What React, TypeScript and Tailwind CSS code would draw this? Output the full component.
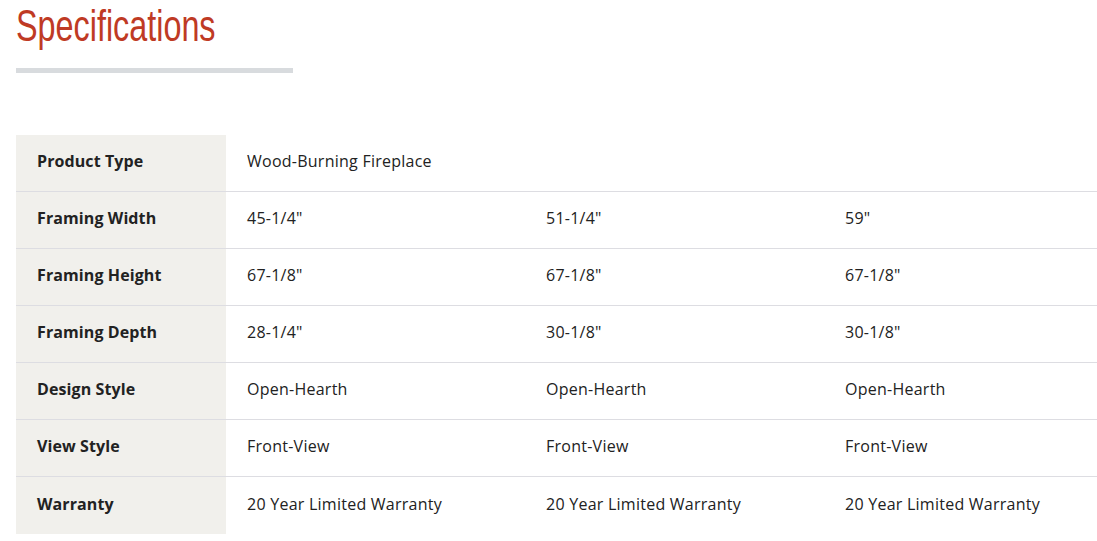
const rows: { label: string; values: string[] }[] = [
  { label: 'Product Type', values: ['Wood-Burning Fireplace'] },
  { label: 'Framing Width', values: ['45-1/4"', '51-1/4"', '59"'] },
  { label: 'Framing Height', values: ['67-1/8"', '67-1/8"', '67-1/8"'] },
  { label: 'Framing Depth', values: ['28-1/4"', '30-1/8"', '30-1/8"'] },
  { label: 'Design Style', values: ['Open-Hearth', 'Open-Hearth', 'Open-Hearth'] },
  { label: 'View Style', values: ['Front-View', 'Front-View', 'Front-View'] },
  { label: 'Warranty', values: ['20 Year Limited Warranty', '20 Year Limited Warranty', '20 Year Limited Warranty'] },
]

export default function App() {
  return (
    <div className="w-[1097px] h-[541px] overflow-hidden bg-white font-['Open_Sans','Noto_Sans',sans-serif] text-[#222222]">
      <div className="pl-4">
        <h2 className="h-[50px] pt-[1px] font-['Liberation_Sans',sans-serif] text-[44px] leading-[50px] text-[#bf3a24] whitespace-nowrap">
          <span className="inline-block origin-left scale-x-[0.735]">Specifications</span>
        </h2>
        <div className="mt-[18px] h-[5px] w-[277px] bg-[#d8dbde]" />
      </div>

      <div className="mt-[62px] pl-4">
        <div className="w-[1107px]">
          {rows.map((row, i) => (
            <div
              key={row.label}
              className={`flex h-[57px] ${i < rows.length - 1 ? 'border-b border-[#dddde2]' : ''}`}
            >
              <div className="w-[210px] shrink-0 bg-[#f1f0ec] pl-[21px] pb-[4px] flex items-center text-[16px] tracking-[0.1px] font-bold">
                {row.label}
              </div>
              {row.values.map((v, j) => (
                <div key={j} className="w-[299px] shrink-0 pl-[21px] pb-[4px] flex items-center text-[16px] tracking-[0.25px]">
                  {v}
                </div>
              ))}
            </div>
          ))}
        </div>
      </div>
    </div>
  )
}
